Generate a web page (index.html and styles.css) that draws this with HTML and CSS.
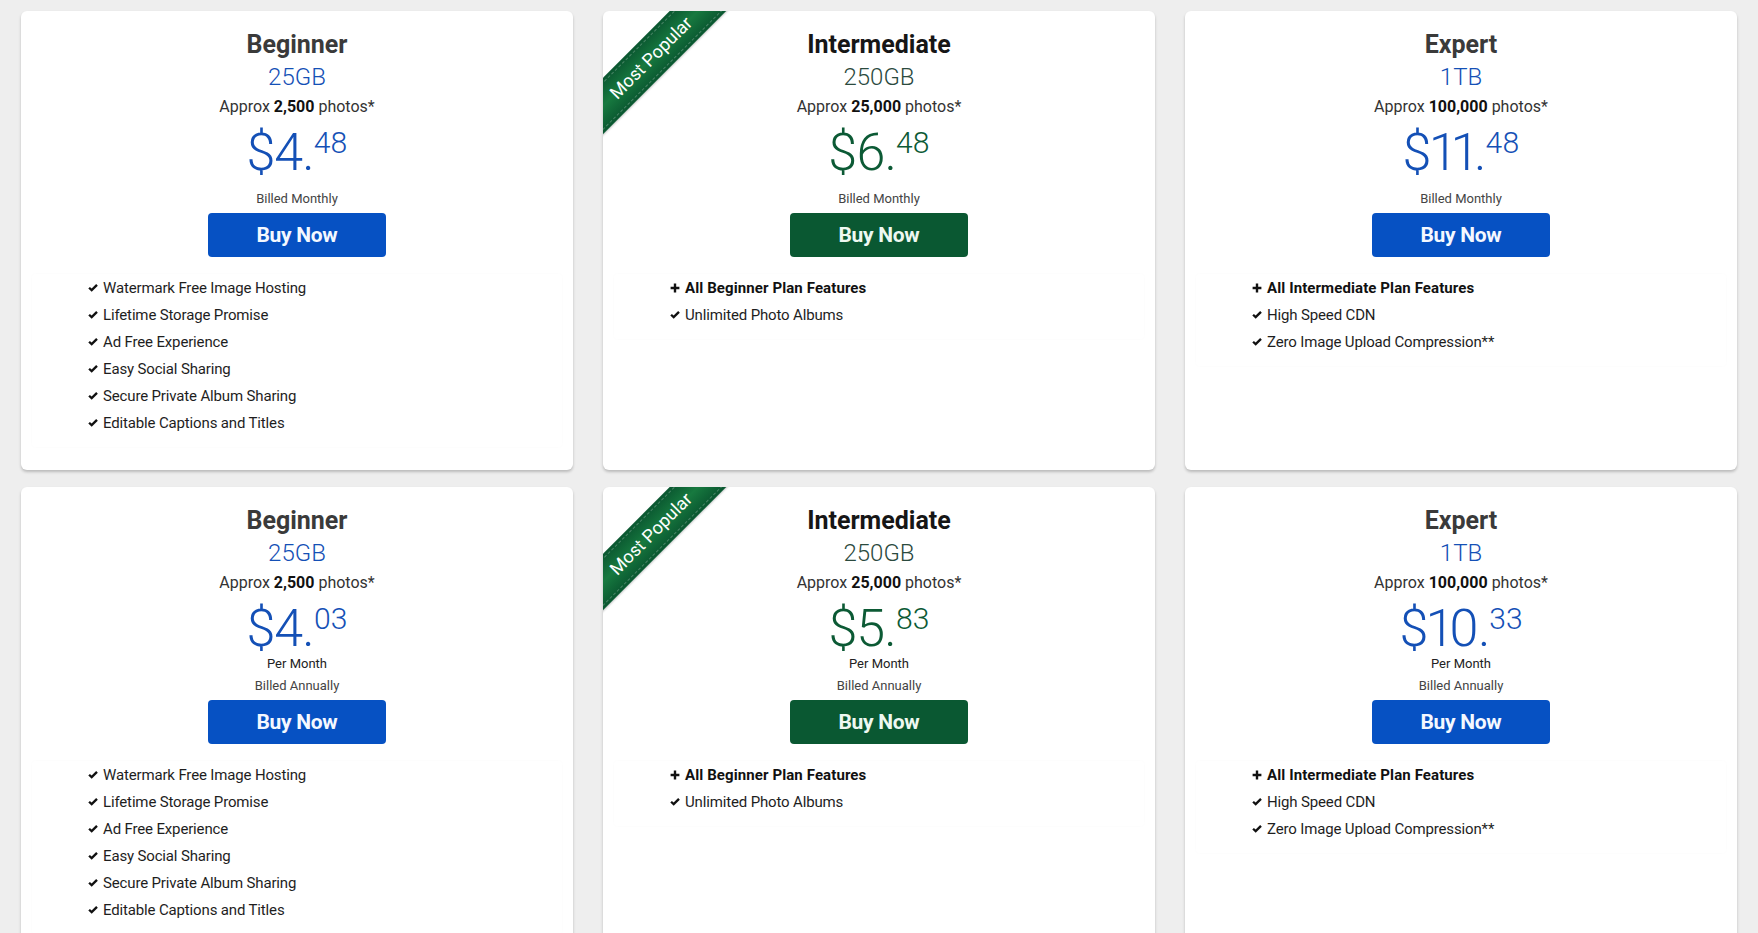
FILE: index.html
```html
<!DOCTYPE html>
<html lang="en">
<head>
<meta charset="utf-8">
<title>Plans</title>
<link rel="stylesheet" href="styles.css">
</head>
<body>
<div class="plans">

  <div class="card">
    <h2 class="plan-name">Beginner</h2>
    <div class="plan-size c-blue">25GB</div>
    <div class="plan-approx">Approx <b>2,500</b> photos*</div>
    <div class="price c-blue"><span class="dollars">$4.</span><span class="cents">48</span></div>
    <div class="billed billed-solo">Billed Monthly</div>
    <a class="buy buy-blue" href="#">Buy Now</a>
    <ul class="features">
      <li><span class="ico"><svg viewBox="0 0 12 10" width="10" height="9"><path d="M1.3 5.3 L4.4 8.2 L10.8 1.8" fill="none" stroke="#111" stroke-width="2.8"/></svg></span>Watermark Free Image Hosting</li>
      <li><span class="ico"><svg viewBox="0 0 12 10" width="10" height="9"><path d="M1.3 5.3 L4.4 8.2 L10.8 1.8" fill="none" stroke="#111" stroke-width="2.8"/></svg></span>Lifetime Storage Promise</li>
      <li><span class="ico"><svg viewBox="0 0 12 10" width="10" height="9"><path d="M1.3 5.3 L4.4 8.2 L10.8 1.8" fill="none" stroke="#111" stroke-width="2.8"/></svg></span>Ad Free Experience</li>
      <li><span class="ico"><svg viewBox="0 0 12 10" width="10" height="9"><path d="M1.3 5.3 L4.4 8.2 L10.8 1.8" fill="none" stroke="#111" stroke-width="2.8"/></svg></span>Easy Social Sharing</li>
      <li><span class="ico"><svg viewBox="0 0 12 10" width="10" height="9"><path d="M1.3 5.3 L4.4 8.2 L10.8 1.8" fill="none" stroke="#111" stroke-width="2.8"/></svg></span>Secure Private Album Sharing</li>
      <li><span class="ico"><svg viewBox="0 0 12 10" width="10" height="9"><path d="M1.3 5.3 L4.4 8.2 L10.8 1.8" fill="none" stroke="#111" stroke-width="2.8"/></svg></span>Editable Captions and Titles</li>
    </ul>
  </div>

  <div class="card">
    <div class="ribbon">Most Popular</div>
    <h2 class="plan-name dark">Intermediate</h2>
    <div class="plan-size c-teal">250GB</div>
    <div class="plan-approx">Approx <b>25,000</b> photos*</div>
    <div class="price c-green"><span class="dollars">$6.</span><span class="cents">48</span></div>
    <div class="billed billed-solo">Billed Monthly</div>
    <a class="buy buy-green" href="#">Buy Now</a>
    <ul class="features">
      <li class="strong"><span class="ico"><svg viewBox="0 0 10 10" width="10" height="10"><path d="M3.8 0.6h2.4v3.2h3.2v2.4h-3.2v3.2h-2.4v-3.2h-3.2v-2.4h3.2z" fill="#111"/></svg></span>All Beginner Plan Features</li>
      <li><span class="ico"><svg viewBox="0 0 12 10" width="10" height="9"><path d="M1.3 5.3 L4.4 8.2 L10.8 1.8" fill="none" stroke="#111" stroke-width="2.8"/></svg></span>Unlimited Photo Albums</li>
    </ul>
  </div>

  <div class="card">
    <h2 class="plan-name">Expert</h2>
    <div class="plan-size c-blue">1TB</div>
    <div class="plan-approx">Approx <b>100,000</b> photos*</div>
    <div class="price c-blue"><span class="dollars">$11.</span><span class="cents">48</span></div>
    <div class="billed billed-solo">Billed Monthly</div>
    <a class="buy buy-blue" href="#">Buy Now</a>
    <ul class="features">
      <li class="strong"><span class="ico"><svg viewBox="0 0 10 10" width="10" height="10"><path d="M3.8 0.6h2.4v3.2h3.2v2.4h-3.2v3.2h-2.4v-3.2h-3.2v-2.4h3.2z" fill="#111"/></svg></span>All Intermediate Plan Features</li>
      <li><span class="ico"><svg viewBox="0 0 12 10" width="10" height="9"><path d="M1.3 5.3 L4.4 8.2 L10.8 1.8" fill="none" stroke="#111" stroke-width="2.8"/></svg></span>High Speed CDN</li>
      <li><span class="ico"><svg viewBox="0 0 12 10" width="10" height="9"><path d="M1.3 5.3 L4.4 8.2 L10.8 1.8" fill="none" stroke="#111" stroke-width="2.8"/></svg></span>Zero Image Upload Compression**</li>
    </ul>
  </div>

  <div class="card">
    <h2 class="plan-name">Beginner</h2>
    <div class="plan-size c-blue">25GB</div>
    <div class="plan-approx">Approx <b>2,500</b> photos*</div>
    <div class="price c-blue"><span class="dollars">$4.</span><span class="cents">03</span></div>
    <div class="per-month">Per Month</div>
    <div class="billed">Billed Annually</div>
    <a class="buy buy-blue" href="#">Buy Now</a>
    <ul class="features">
      <li><span class="ico"><svg viewBox="0 0 12 10" width="10" height="9"><path d="M1.3 5.3 L4.4 8.2 L10.8 1.8" fill="none" stroke="#111" stroke-width="2.8"/></svg></span>Watermark Free Image Hosting</li>
      <li><span class="ico"><svg viewBox="0 0 12 10" width="10" height="9"><path d="M1.3 5.3 L4.4 8.2 L10.8 1.8" fill="none" stroke="#111" stroke-width="2.8"/></svg></span>Lifetime Storage Promise</li>
      <li><span class="ico"><svg viewBox="0 0 12 10" width="10" height="9"><path d="M1.3 5.3 L4.4 8.2 L10.8 1.8" fill="none" stroke="#111" stroke-width="2.8"/></svg></span>Ad Free Experience</li>
      <li><span class="ico"><svg viewBox="0 0 12 10" width="10" height="9"><path d="M1.3 5.3 L4.4 8.2 L10.8 1.8" fill="none" stroke="#111" stroke-width="2.8"/></svg></span>Easy Social Sharing</li>
      <li><span class="ico"><svg viewBox="0 0 12 10" width="10" height="9"><path d="M1.3 5.3 L4.4 8.2 L10.8 1.8" fill="none" stroke="#111" stroke-width="2.8"/></svg></span>Secure Private Album Sharing</li>
      <li><span class="ico"><svg viewBox="0 0 12 10" width="10" height="9"><path d="M1.3 5.3 L4.4 8.2 L10.8 1.8" fill="none" stroke="#111" stroke-width="2.8"/></svg></span>Editable Captions and Titles</li>
    </ul>
  </div>

  <div class="card">
    <div class="ribbon">Most Popular</div>
    <h2 class="plan-name dark">Intermediate</h2>
    <div class="plan-size c-teal">250GB</div>
    <div class="plan-approx">Approx <b>25,000</b> photos*</div>
    <div class="price c-green"><span class="dollars">$5.</span><span class="cents">83</span></div>
    <div class="per-month">Per Month</div>
    <div class="billed">Billed Annually</div>
    <a class="buy buy-green" href="#">Buy Now</a>
    <ul class="features">
      <li class="strong"><span class="ico"><svg viewBox="0 0 10 10" width="10" height="10"><path d="M3.8 0.6h2.4v3.2h3.2v2.4h-3.2v3.2h-2.4v-3.2h-3.2v-2.4h3.2z" fill="#111"/></svg></span>All Beginner Plan Features</li>
      <li><span class="ico"><svg viewBox="0 0 12 10" width="10" height="9"><path d="M1.3 5.3 L4.4 8.2 L10.8 1.8" fill="none" stroke="#111" stroke-width="2.8"/></svg></span>Unlimited Photo Albums</li>
    </ul>
  </div>

  <div class="card">
    <h2 class="plan-name">Expert</h2>
    <div class="plan-size c-blue">1TB</div>
    <div class="plan-approx">Approx <b>100,000</b> photos*</div>
    <div class="price c-blue"><span class="dollars">$10.</span><span class="cents">33</span></div>
    <div class="per-month">Per Month</div>
    <div class="billed">Billed Annually</div>
    <a class="buy buy-blue" href="#">Buy Now</a>
    <ul class="features">
      <li class="strong"><span class="ico"><svg viewBox="0 0 10 10" width="10" height="10"><path d="M3.8 0.6h2.4v3.2h3.2v2.4h-3.2v3.2h-2.4v-3.2h-3.2v-2.4h3.2z" fill="#111"/></svg></span>All Intermediate Plan Features</li>
      <li><span class="ico"><svg viewBox="0 0 12 10" width="10" height="9"><path d="M1.3 5.3 L4.4 8.2 L10.8 1.8" fill="none" stroke="#111" stroke-width="2.8"/></svg></span>High Speed CDN</li>
      <li><span class="ico"><svg viewBox="0 0 12 10" width="10" height="9"><path d="M1.3 5.3 L4.4 8.2 L10.8 1.8" fill="none" stroke="#111" stroke-width="2.8"/></svg></span>Zero Image Upload Compression**</li>
    </ul>
  </div>

</div>
</body>
</html>
```

FILE: styles.css
```css
* { box-sizing: border-box; }

html, body {
  margin: 0;
  padding: 0;
  background: #eeeeee;
  font-family: Roboto, "Liberation Sans", Arial, sans-serif;
  color: #222;
}

.plans {
  display: grid;
  grid-template-columns: repeat(3, 1fr);
  gap: 17px 30px;
  padding: 11px 21px;
}

.card {
  position: relative;
  overflow: hidden;
  background: #fff;
  border-radius: 6px;
  box-shadow: 0 2px 3px rgba(0, 0, 0, 0.22);
  padding: 17px 0 23px;
  text-align: center;
}

.plan-name {
  margin: 0;
  font-size: 25px;
  line-height: 33px;
  font-weight: 700;
  color: #3a3a3a;
}
.plan-name.dark { color: #161616; }

.plan-size {
  font-size: 24px;
  line-height: 33px;
  font-weight: 300;
}

.c-blue { color: #1450b6; }
.c-teal { color: #2b4a3e; }
.c-green { color: #0c5a35; }

.plan-approx {
  font-size: 16px;
  line-height: 26px;
  color: #333;
}
.plan-approx b { color: #111; font-weight: 700; }

.price {
  margin-top: 7px;
  font-size: 52px;
  line-height: 52px;
  font-weight: 300;
  white-space: nowrap;
  font-variant-numeric: proportional-nums;
}
.price .dollars { letter-spacing: -1px; }
.price .cents {
  font-size: 30px;
  line-height: 30px;
  vertical-align: 17px;
  margin-left: 0;
}

.per-month {
  font-size: 13px;
  line-height: 18px;
  color: #222;
}

.billed {
  font-size: 13px;
  line-height: 24px;
  color: #444;
  margin-top: 1px;
}
.billed-solo { margin-top: 8px; }

.buy {
  display: block;
  width: 178px;
  height: 44px;
  margin: 2px auto 0;
  border-radius: 4px;
  font-size: 21px;
  line-height: 44px;
  font-weight: 700;
  color: #f4f8ff;
  text-decoration: none;
  letter-spacing: -0.3px;
}
.buy-blue { background: #0651c3; }
.buy-green { background: #0a5832; color: #eef8f1; }

.features {
  list-style: none;
  margin: 17px 11px 0;
  padding: 0 0 11px 56px;
  text-align: left;
  box-shadow: 0 0 3px rgba(0, 0, 0, 0.025);
  border-radius: 4px;
}
.features li {
  display: flex;
  align-items: center;
  height: 27px;
  font-size: 15px;
  color: #1e1e1e;
  letter-spacing: -0.15px;
}
.features li.strong {
  font-weight: 700;
  color: #111;
  letter-spacing: 0.1px;
}
.ico {
  display: inline-flex;
  align-items: center;
  width: 15px;
  flex: none;
}
.ico svg { display: block; }

.ribbon {
  position: absolute;
  left: -52px;
  top: 27px;
  width: 200px;
  height: 40px;
  transform: rotate(-45deg);
  background: linear-gradient(to bottom, #0a5630 0%, #17793f 50%, #0a5630 100%);
  color: #fff;
  font-size: 18px;
  line-height: 40px;
  text-align: center;
  box-shadow: 0 1px 2px rgba(0, 0, 0, 0.2);
}
.ribbon::before {
  content: "";
  position: absolute;
  left: 0;
  right: 0;
  top: 3px;
  bottom: 3px;
  border-top: 1px dashed rgba(255, 255, 255, 0.25);
  border-bottom: 1px dashed rgba(255, 255, 255, 0.25);
}
```
